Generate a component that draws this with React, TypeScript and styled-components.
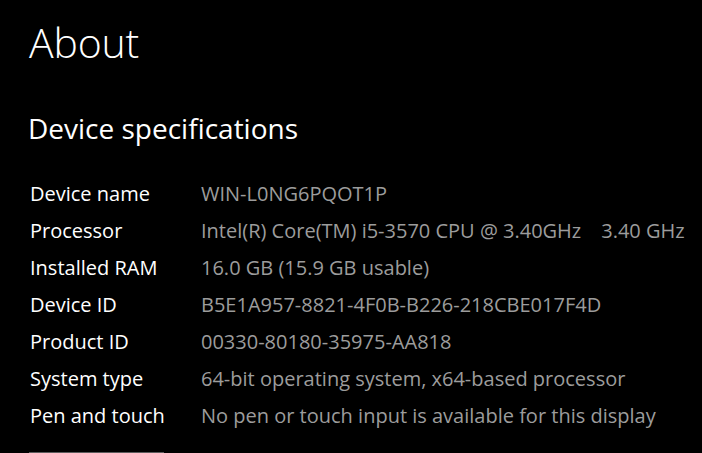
import React from 'react';
import styled, { createGlobalStyle } from 'styled-components';

const GlobalStyle = createGlobalStyle`
	html, body {
		margin: 0;
		padding: 0;
		background: #000;
	}
	body {
		font-family: 'Segoe UI', 'Open Sans', 'Noto Sans', sans-serif;
		color: #fff;
		overflow: hidden;
	}
`;

const Page = styled.main`
	width: 702px;
	height: 453px;
	padding: 16px 0 0 30px;
	box-sizing: border-box;
	background: #000;
	overflow: hidden;
`;

const Title = styled.h1`
	margin: 0 0 0 -1px;
	font-size: 41px;
	line-height: 52px;
	font-weight: 300;
	letter-spacing: -0.2px;
`;

const SectionTitle = styled.h2`
	margin: 42px 0 0 -2px;
	font-size: 28px;
	line-height: 36px;
	font-weight: 400;
`;

const SpecList = styled.dl`
	margin: 29px 0 0;
	display: grid;
	grid-template-columns: 171px auto;
	grid-auto-rows: 37px;
	align-items: center;
	font-size: 20px;
	line-height: 37px;
`;

const Label = styled.dt`
	margin: 0;
	color: #fff;
	white-space: nowrap;
`;

const Value = styled.dd`
	margin: 0;
	color: #9c9c9c;
	white-space: nowrap;
`;

const Extra = styled.span`
	margin-left: 20px;
`;

const CopyButton = styled.button`
	display: block;
	margin-top: 18px;
	margin-left: -1px;
	width: 135px;
	height: 32px;
	background: #333;
	border: 2px solid #5c5c5c;
	padding: 0;
`;

type Spec = { label: string; value: string; extra?: string };

const specs: Spec[] = [
	{ label: 'Device name', value: 'WIN-L0NG6PQOT1P' },
	{ label: 'Processor', value: 'Intel(R) Core(TM) i5-3570 CPU @ 3.40GHz', extra: '3.40 GHz' },
	{ label: 'Installed RAM', value: '16.0 GB (15.9 GB usable)' },
	{ label: 'Device ID', value: 'B5E1A957-8821-4F0B-B226-218CBE017F4D' },
	{ label: 'Product ID', value: '00330-80180-35975-AA818' },
	{ label: 'System type', value: '64-bit operating system, x64-based processor' },
	{ label: 'Pen and touch', value: 'No pen or touch input is available for this display' },
];

function App() {
	return (
		<>
			<GlobalStyle />
			<Page>
				<Title>About</Title>
				<SectionTitle>Device specifications</SectionTitle>
				<SpecList>
					{specs.map((s) => (
						<React.Fragment key={s.label}>
							<Label>{s.label}</Label>
							<Value>
								{s.value}
								{s.extra ? <Extra>{s.extra}</Extra> : null}
							</Value>
						</React.Fragment>
					))}
				</SpecList>
				<CopyButton aria-label="Copy" />
			</Page>
		</>
	);
}

export default App;
